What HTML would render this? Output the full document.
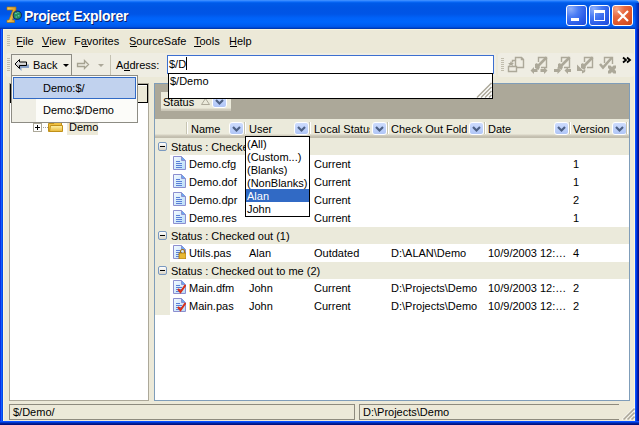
<!DOCTYPE html>
<html><head><meta charset="utf-8">
<style>
*{margin:0;padding:0;box-sizing:border-box}
html{background:#e6dfc2}body{width:639px;height:425px;overflow:hidden;background:transparent}
body{position:relative;font-family:"Liberation Sans",sans-serif;font-size:11px;color:#000}
.a{position:absolute}
.t{position:absolute;white-space:nowrap;line-height:13px}
#title{left:0;top:0;width:639px;height:29px;
background:linear-gradient(to bottom,#4a97ff 0px,#2a80ff 1px,#0a6af8 2px,#005ae8 3px,#0054e3 8px,#0055e6 14px,#0062f8 18px,#0066fc 22px,#005ef2 25px,#0056e8 27px,#0040c0 28px,#0035a8 29px);
border-radius:0 4px 0 0}
#lf{left:0;top:29px;width:3px;height:396px;background:linear-gradient(to right,#0a2ee0 0,#0a2ee0 1px,#1060ff 1px,#1060ff 2px,#0048e8 2px)}
#rf{left:635px;top:29px;width:4px;height:396px;background:linear-gradient(to right,#0a50ff 0,#0a50ff 1px,#0038e0 1px,#0038e0 2px,#0020b0 2px,#0020b0 3px,#001090 3px)}
#bf{left:0;top:421px;width:639px;height:4px;background:linear-gradient(to bottom,#0a50ff 0,#0a50ff 1px,#0038d0 1px,#0038d0 2px,#002098 2px,#002098 3px,#001080 3px)}
.ttl{left:24px;top:7.5px;font-size:14px;letter-spacing:-0.25px;font-weight:bold;color:#fff;text-shadow:1px 1px 0 #0a1e6e;line-height:17px}
.cb{width:21px;height:21px;top:5px;border:1px solid #fff;border-radius:3px}
.grip{width:3px;background:repeating-linear-gradient(to bottom,#c1bdad 0,#c1bdad 1px,transparent 1px,transparent 2px)}
.sep{width:1px;background:#c5c2b2}
.hd{background:linear-gradient(to bottom,#ebeadb 0,#ebeadb 15px,#d6d2c2 16px,#cbc7b8 17px,#c1bdad 18px)}
.dd{width:15px;height:13px;border:1px solid #fff;background:linear-gradient(to bottom,#cddcfd,#b0c6f7);border-radius:3px}
.row{left:170px;width:459px;height:18px;background:#fff}
.grp{left:155px;width:474px;height:17px;background:#ebeadb}
.mbox{width:9px;height:9px;border:1px solid #7a99c0;border-radius:2px;background:linear-gradient(to bottom,#fff,#d8d3c5)}
.mbox::after{content:"";position:absolute;left:1px;top:3px;width:5px;height:1px;background:#000}
</style></head><body>
<div id="title" class="a"></div>
<div class="a" style="left:0;top:29px;width:639px;height:396px;background:#ece9d8"></div>
<div id="lf" class="a"></div>
<div class="a" style="left:635px;top:3px;width:4px;height:26px;background:linear-gradient(to right,#0050e8,#0038c8 50%,#0020a0)"></div>
<div id="rf" class="a"></div>
<div id="bf" class="a"></div>
<div class="a" style="left:3px;top:29px;width:632px;height:1px;background:#fcf6dc"></div>
<div class="a" style="left:3px;top:29px;width:1px;height:392px;background:#fcf6dc"></div>
<div class="a" style="left:634px;top:29px;width:1px;height:392px;background:#fcf6dc"></div>

<!-- title icon -->
<svg class="a" style="left:0;top:0" width="26" height="26" viewBox="0 0 26 26">
<defs><linearGradient id="gold" x1="0" y1="0" x2="1" y2="0"><stop offset="0" stop-color="#f8d060"/><stop offset="1" stop-color="#d89820"/></linearGradient></defs>
<path d="M7 7 H16 V10 L12.5 20 H14.5 V22.5 H7 V20 H9 L12.8 10 H7 Z" fill="url(#gold)" stroke="#a87010" stroke-width="0.7"/>
<circle cx="17.3" cy="15.2" r="4.1" fill="#23905a" stroke="#0e1e6a" stroke-width="1"/>
<path d="M15.3 13.6 h1.4 M17.8 15.8 h1.6 M15.6 17 h1.2 M17.5 12.7 h1" stroke="#8fd0f0" stroke-width="0.9"/>
</svg>
<div class="t ttl">Project Explorer</div>
<div class="a cb" style="left:566px;background:radial-gradient(circle at 20% 15%,#8fb0fb 0,#4a7cf4 35%,#2a5ce8 70%,#1d4ad8 100%)"><div class="a" style="left:4px;top:12px;width:8px;height:3px;background:#fff"></div></div>
<div class="a cb" style="left:589px;background:radial-gradient(circle at 20% 15%,#8fb0fb 0,#4a7cf4 35%,#2a5ce8 70%,#1d4ad8 100%)"><div class="a" style="left:4px;top:4px;width:11px;height:11px;border:1px solid #fff;border-top-width:3px"></div></div>
<div class="a cb" style="left:612px;background:radial-gradient(circle at 20% 15%,#f6a88a 0,#e86a42 35%,#dc5428 70%,#c84418 100%)">
<svg class="a" style="left:4px;top:4px" width="12" height="12"><path d="M1 1 L11 11 M11 1 L1 11" stroke="#fff" stroke-width="2.2"/></svg></div>
<!-- menu bar -->
<div class="a grip" style="left:7px;top:35px;height:11px"></div>
<div class="t" style="left:16px;top:35px">File</div>
<div class="t" style="left:42px;top:35px">View</div>
<div class="t" style="left:74px;top:35px">Favorites</div>
<div class="t" style="left:129px;top:35px">SourceSafe</div>
<div class="t" style="left:194px;top:35px">Tools</div>
<div class="t" style="left:229px;top:35px">Help</div>

<div class="a" style="left:17px;top:46px;width:6px;height:1px;background:#000"></div>
<div class="a" style="left:42px;top:46px;width:7px;height:1px;background:#000"></div>
<div class="a" style="left:82px;top:46px;width:6px;height:1px;background:#000"></div>
<div class="a" style="left:130px;top:46px;width:7px;height:1px;background:#000"></div>
<div class="a" style="left:194px;top:46px;width:7px;height:1px;background:#000"></div>
<div class="a" style="left:230px;top:46px;width:7px;height:1px;background:#000"></div>
<!-- toolbar -->
<div class="a" style="left:6px;top:53px;width:490px;height:24px;background:#efede3;border-radius:3px"></div>
<div class="a" style="left:498px;top:53px;width:136px;height:24px;background:#efede3;border-radius:3px"></div>
<div class="a grip" style="left:7px;top:58px;height:13px"></div>
<div class="a" style="left:11px;top:54px;width:61px;height:22px;border:1px solid #8d8c84;border-bottom:none;background:#f1efe5"></div>
<svg class="a" style="left:12px;top:56px" width="20" height="18" viewBox="12 56 20 18">
<defs><linearGradient id="ag" x1="0" y1="0" x2="0" y2="1"><stop offset="0" stop-color="#ffffff"/><stop offset="1" stop-color="#a8a8a8"/></linearGradient></defs>
<path d="M17 66.5 L21.5 62 L21.5 64.5 L29 64.5 L29 68 L21.5 68 L21.5 71 Z" fill="#8aa2c8"/>
<path d="M15 64 L19.5 59.5 L19.5 62 L26.5 62 L26.5 65.5 L19.5 65.5 L19.5 68.5 Z" fill="url(#ag)" stroke="#000" stroke-width="1" stroke-linejoin="miter"/>
</svg>
<div class="t" style="left:33px;top:59px">Back</div>
<div class="a" style="left:63px;top:64px;width:0;height:0;border-left:3px solid transparent;border-right:3px solid transparent;border-top:3px solid #000"></div>
<svg class="a" style="left:75px;top:58px" width="16" height="14" viewBox="75 58 16 14"><path d="M77.5 63.5 H84.5 V60.5 L88.5 64.5 L84.5 68.5 V66.5 H77.5 Z" fill="none" stroke="#a5a291" stroke-width="1.3"/></svg>
<div class="a" style="left:98px;top:64px;width:0;height:0;border-left:3px solid transparent;border-right:3px solid transparent;border-top:3px solid #aca899"></div>
<div class="a sep" style="left:110px;top:55px;height:20px"></div>
<div class="t" style="left:116px;top:59px">Address:</div><div class="a" style="left:124px;top:70px;width:6px;height:1px;background:#000"></div>
<div class="a" style="left:167px;top:55px;width:327px;height:19px;border:1px solid #3c6fd0;background:#fff"></div>
<div class="t" style="left:169px;top:58px">$/D</div>
<div class="a" style="left:186px;top:57px;width:1px;height:13px;background:#000"></div>

<!-- right toolbar -->
<div class="a grip" style="left:501px;top:58px;height:13px"></div>
<svg class="a" style="left:500px;top:52px" width="135" height="25" viewBox="500 52 135 25">
<g fill="none" stroke="#aca899" stroke-width="1.4">
<path d="M515.5 60.5 V57.5 H521.5 L523.5 59.5 V67.5 H516.5"/>
<path d="M521.5 57.5 V59.5 H523.5"/>
<path d="M512.5 62.5 V60.5 H515.5 V66.5"/>
<path d="M508.5 66.5 H516.5 V71.5 H508.5 Z"/>
<path d="M538.5 62 V57.5 H546.5 V67.5 H541"/>
<path d="M561.5 62 V57.5 H569.5 V67.5 H564"/>
<path d="M584.5 62 V57.5 H592.5 V67.5 H587"/>
<path d="M604.5 63 V57.5 H612.5 V64"/>
</g>
<g stroke="#aca899" stroke-width="2.6" fill="none">
<path d="M546.5 57.5 L537 67"/>
<path d="M569.5 57.5 L560 67"/>
<path d="M592.5 57.5 L583 67"/>
<path d="M612 57.5 L603 67.5 L600 64"/>
</g>
<g fill="#aca899">
<path d="M511 61 L512 63 L514 63 L512.5 64.3 L513.2 66 L511 65 L508.8 66 L509.5 64.3 L508 63 L510 63 Z"/>
<path d="M535 64 L537 63 L540 67 L538.5 70 L535 68 Z"/>
<path d="M530.5 70.5 L534 67 V69 H537.5 V72 H534 V74 Z"/>
<path d="M547.5 70.5 L544 67 V69 H540.5 V72 H544 V74 Z"/>
<path d="M558 64 L560 63 L563 67 L561.5 70 L558 68 Z"/>
<path d="M561 70.5 L557.5 67 V69 H554 V72 H557.5 V74 Z"/>
<path d="M564.5 70.5 L568 67 V69 H571 V72 H568 V74 Z"/>
<path d="M581 64 L583 63 L586 67 L584.5 70 L581 68 Z"/>
<path d="M577 64.5 V71 H583.5 Z"/>
<path d="M582 71 L585.5 69.5 L585 72 L582 73.5 Z"/>
<path d="M608 65.5 h2.5 l1.5 1.5 l1.5 -1.5 h2.5 v2.5 l-1.5 1.5 l1.5 1.5 v2.5 h-2.5 l-1.5 -1.5 l-1.5 1.5 h-2.5 v-2.5 l1.5 -1.5 l-1.5 -1.5 Z"/>
</g>
<path d="M623 57.5 L626 60 L623 62.5 M627 57.5 L630 60 L627 62.5" fill="none" stroke="#000" stroke-width="1.8"/>
</svg>


<!-- tree pane -->
<div class="a" style="left:9px;top:83px;width:140px;height:318px;border:1px solid #aca899;background:#fff"></div>
<div class="a" style="left:10px;top:84px;width:138px;height:19px;border:1px solid #000;background:#ece9d8;box-shadow:inset 1px 1px 0 #fff"></div>
<div class="a" style="left:33px;top:123px;width:9px;height:9px;border:1px solid #aca899;background:#fff"><div class="a" style="left:1px;top:3px;width:5px;height:1px;background:#000"></div><div class="a" style="left:3px;top:1px;width:1px;height:5px;background:#000"></div></div>
<div class="a" style="left:43px;top:127px;width:5px;height:1px;background:repeating-linear-gradient(to right,#a0a0a0 0,#a0a0a0 1px,transparent 1px,transparent 2px)"></div>
<svg class="a" style="left:48px;top:122px" width="16" height="11" viewBox="0 0 16 11">
<defs><linearGradient id="fg" x1="0" y1="0" x2="0" y2="1"><stop offset="0" stop-color="#fff2a8"/><stop offset="1" stop-color="#e8b838"/></linearGradient></defs>
<path d="M0.5 1.5 H6 L7 0.5 H13.5 V9.5 H0.5 Z" fill="#f0c040" stroke="#c09018"/>
<path d="M2.5 3.5 H14.5 V9.5 H1.5 Z" fill="url(#fg)" stroke="#c09018"/>
</svg>
<div class="a" style="left:67px;top:119px;width:31px;height:16px;background:#ece9d8"></div><div class="t" style="left:69px;top:121px">Demo</div>

<!-- right pane -->
<div class="a" style="left:154px;top:83px;width:476px;height:318px;border:1px solid #7f9db9;background:#fff"></div>
<div class="a" style="left:155px;top:84px;width:474px;height:35px;background:#aca899"></div>
<div class="a hd" style="left:155px;top:119px;width:474px;height:19px"></div>

<!-- header -->
<div class="a" style="left:186px;top:122px;width:1px;height:12px;background:#c7c5b2"></div><div class="a" style="left:187px;top:122px;width:1px;height:12px;background:#fff"></div><div class="a" style="left:191px;top:119px;width:36px;height:17px;overflow:hidden"><div class="t" style="left:0;top:4px">Name</div></div><div class="a dd" style="left:229px;top:122px"><svg class="a" style="left:2px;top:3px" width="9" height="7"><path d="M1 1 L4.5 4.5 L8 1" fill="none" stroke="#4d6185" stroke-width="2.2"/></svg></div>
<div class="a" style="left:244px;top:122px;width:1px;height:12px;background:#c7c5b2"></div><div class="a" style="left:245px;top:122px;width:1px;height:12px;background:#fff"></div><div class="a" style="left:249px;top:119px;width:43px;height:17px;overflow:hidden"><div class="t" style="left:0;top:4px">User</div></div><div class="a dd" style="left:294px;top:122px"><svg class="a" style="left:2px;top:3px" width="9" height="7"><path d="M1 1 L4.5 4.5 L8 1" fill="none" stroke="#4d6185" stroke-width="2.2"/></svg></div>
<div class="a" style="left:309px;top:122px;width:1px;height:12px;background:#c7c5b2"></div><div class="a" style="left:310px;top:122px;width:1px;height:12px;background:#fff"></div><div class="a" style="left:314px;top:119px;width:56px;height:17px;overflow:hidden"><div class="t" style="left:0;top:4px">Local Status</div></div><div class="a dd" style="left:372px;top:122px"><svg class="a" style="left:2px;top:3px" width="9" height="7"><path d="M1 1 L4.5 4.5 L8 1" fill="none" stroke="#4d6185" stroke-width="2.2"/></svg></div>
<div class="a" style="left:387px;top:122px;width:1px;height:12px;background:#c7c5b2"></div><div class="a" style="left:388px;top:122px;width:1px;height:12px;background:#fff"></div><div class="a" style="left:391px;top:119px;width:76px;height:17px;overflow:hidden"><div class="t" style="left:0;top:4px">Check Out Folder</div></div><div class="a dd" style="left:469px;top:122px"><svg class="a" style="left:2px;top:3px" width="9" height="7"><path d="M1 1 L4.5 4.5 L8 1" fill="none" stroke="#4d6185" stroke-width="2.2"/></svg></div>
<div class="a" style="left:484px;top:122px;width:1px;height:12px;background:#c7c5b2"></div><div class="a" style="left:485px;top:122px;width:1px;height:12px;background:#fff"></div><div class="a" style="left:488px;top:119px;width:64px;height:17px;overflow:hidden"><div class="t" style="left:0;top:4px">Date</div></div><div class="a dd" style="left:554px;top:122px"><svg class="a" style="left:2px;top:3px" width="9" height="7"><path d="M1 1 L4.5 4.5 L8 1" fill="none" stroke="#4d6185" stroke-width="2.2"/></svg></div>
<div class="a" style="left:569px;top:122px;width:1px;height:12px;background:#c7c5b2"></div><div class="a" style="left:570px;top:122px;width:1px;height:12px;background:#fff"></div><div class="a" style="left:573px;top:119px;width:37px;height:17px;overflow:hidden"><div class="t" style="left:0;top:4px">Version</div></div><div class="a dd" style="left:612px;top:122px"><svg class="a" style="left:2px;top:3px" width="9" height="7"><path d="M1 1 L4.5 4.5 L8 1" fill="none" stroke="#4d6185" stroke-width="2.2"/></svg></div>
<div class="a" style="left:626px;top:122px;width:1px;height:12px;background:#c7c5b2"></div><div class="a" style="left:627px;top:122px;width:1px;height:12px;background:#fff"></div>
<!-- grid -->
<div class="a" style="left:155px;top:138px;width:15px;height:177px;background:#ebeadb"></div>
<div class="a grp" style="top:138px"></div><div class="a mbox" style="left:158px;top:142px"></div><div class="t" style="left:171px;top:141px">Status : Checked out (0)</div>
<div class="a row" style="top:155px"></div><svg class="a" style="left:173px;top:156px" width="13" height="14" viewBox="0 0 13 14"><defs><linearGradient id="dg1" x1="0" y1="0" x2="1" y2="1"><stop offset="0" stop-color="#f4faff"/><stop offset="1" stop-color="#b8dcf8"/></linearGradient></defs><path d="M0.5 0.5 H8.5 L12.5 4.5 V13.5 H0.5 Z" fill="url(#dg1)" stroke="#8c8fd0"/><path d="M8.5 0.5 V4.5 H12.5" fill="#6aa8f0" stroke="#8c8fd0"/><path d="M3 5.5 H7 M3 7.5 H9 M3 9.5 H9 M3 11.5 H9" stroke="#5a7fd8" stroke-width="1"/></svg><div class="t" style="left:189px;top:158px">Demo.cfg</div><div class="t" style="left:314px;top:158px">Current</div><div class="t" style="left:573px;top:158px">1</div>
<div class="a row" style="top:173px"></div><svg class="a" style="left:173px;top:174px" width="13" height="14" viewBox="0 0 13 14"><defs><linearGradient id="dg2" x1="0" y1="0" x2="1" y2="1"><stop offset="0" stop-color="#f4faff"/><stop offset="1" stop-color="#b8dcf8"/></linearGradient></defs><path d="M0.5 0.5 H8.5 L12.5 4.5 V13.5 H0.5 Z" fill="url(#dg2)" stroke="#8c8fd0"/><path d="M8.5 0.5 V4.5 H12.5" fill="#6aa8f0" stroke="#8c8fd0"/><path d="M3 5.5 H7 M3 7.5 H9 M3 9.5 H9 M3 11.5 H9" stroke="#5a7fd8" stroke-width="1"/></svg><div class="t" style="left:189px;top:176px">Demo.dof</div><div class="t" style="left:314px;top:176px">Current</div><div class="t" style="left:573px;top:176px">1</div>
<div class="a row" style="top:191px"></div><svg class="a" style="left:173px;top:192px" width="13" height="14" viewBox="0 0 13 14"><defs><linearGradient id="dg3" x1="0" y1="0" x2="1" y2="1"><stop offset="0" stop-color="#f4faff"/><stop offset="1" stop-color="#b8dcf8"/></linearGradient></defs><path d="M0.5 0.5 H8.5 L12.5 4.5 V13.5 H0.5 Z" fill="url(#dg3)" stroke="#8c8fd0"/><path d="M8.5 0.5 V4.5 H12.5" fill="#6aa8f0" stroke="#8c8fd0"/><path d="M3 5.5 H7 M3 7.5 H9 M3 9.5 H9 M3 11.5 H9" stroke="#5a7fd8" stroke-width="1"/></svg><div class="t" style="left:189px;top:194px">Demo.dpr</div><div class="t" style="left:314px;top:194px">Current</div><div class="t" style="left:573px;top:194px">2</div>
<div class="a row" style="top:209px"></div><svg class="a" style="left:173px;top:210px" width="13" height="14" viewBox="0 0 13 14"><defs><linearGradient id="dg4" x1="0" y1="0" x2="1" y2="1"><stop offset="0" stop-color="#f4faff"/><stop offset="1" stop-color="#b8dcf8"/></linearGradient></defs><path d="M0.5 0.5 H8.5 L12.5 4.5 V13.5 H0.5 Z" fill="url(#dg4)" stroke="#8c8fd0"/><path d="M8.5 0.5 V4.5 H12.5" fill="#6aa8f0" stroke="#8c8fd0"/><path d="M3 5.5 H7 M3 7.5 H9 M3 9.5 H9 M3 11.5 H9" stroke="#5a7fd8" stroke-width="1"/></svg><div class="t" style="left:189px;top:212px">Demo.res</div><div class="t" style="left:314px;top:212px">Current</div><div class="t" style="left:573px;top:212px">1</div>
<div class="a grp" style="top:227px"></div><div class="a mbox" style="left:158px;top:231px"></div><div class="t" style="left:171px;top:230px">Status : Checked out (1)</div>
<div class="a row" style="top:244px"></div><svg class="a" style="left:173px;top:245px" width="13" height="14" viewBox="0 0 13 14"><defs><linearGradient id="dg5" x1="0" y1="0" x2="1" y2="1"><stop offset="0" stop-color="#f4faff"/><stop offset="1" stop-color="#b8dcf8"/></linearGradient></defs><path d="M0.5 0.5 H8.5 L12.5 4.5 V13.5 H0.5 Z" fill="url(#dg5)" stroke="#8c8fd0"/><path d="M8.5 0.5 V4.5 H12.5" fill="#6aa8f0" stroke="#8c8fd0"/><path d="M3 5.5 H7 M3 7.5 H9 M3 9.5 H9 M3 11.5 H9" stroke="#5a7fd8" stroke-width="1"/><rect x="6" y="8" width="7" height="6" fill="#e8b830" stroke="#a07010" stroke-width="0.8"/><path d="M7.5 8 V6.5 A2 2 0 0 1 11.5 6.5 V8" fill="none" stroke="#a07010" stroke-width="1.2"/></svg><div class="t" style="left:189px;top:247px">Utils.pas</div><div class="t" style="left:249px;top:247px">Alan</div><div class="t" style="left:314px;top:247px">Outdated</div><div class="t" style="left:391px;top:247px">D:\ALAN\Demo</div><div class="t" style="left:488px;top:247px">10/9/2003 12:&hellip;</div><div class="t" style="left:573px;top:247px">4</div>
<div class="a grp" style="top:262px"></div><div class="a mbox" style="left:158px;top:266px"></div><div class="t" style="left:171px;top:265px">Status : Checked out to me (2)</div>
<div class="a row" style="top:279px"></div><svg class="a" style="left:173px;top:280px" width="13" height="14" viewBox="0 0 13 14"><defs><linearGradient id="dg6" x1="0" y1="0" x2="1" y2="1"><stop offset="0" stop-color="#f4faff"/><stop offset="1" stop-color="#b8dcf8"/></linearGradient></defs><path d="M0.5 0.5 H8.5 L12.5 4.5 V13.5 H0.5 Z" fill="url(#dg6)" stroke="#8c8fd0"/><path d="M8.5 0.5 V4.5 H12.5" fill="#6aa8f0" stroke="#8c8fd0"/><path d="M3 5.5 H7 M3 7.5 H9 M3 9.5 H9 M3 11.5 H9" stroke="#5a7fd8" stroke-width="1"/><path d="M5 9 L7.5 12 L12.5 5" fill="none" stroke="#d83018" stroke-width="2"/></svg><div class="t" style="left:189px;top:282px">Main.dfm</div><div class="t" style="left:249px;top:282px">John</div><div class="t" style="left:314px;top:282px">Current</div><div class="t" style="left:391px;top:282px">D:\Projects\Demo</div><div class="t" style="left:488px;top:282px">10/9/2003 12:&hellip;</div><div class="t" style="left:573px;top:282px">2</div>
<div class="a row" style="top:297px"></div><svg class="a" style="left:173px;top:298px" width="13" height="14" viewBox="0 0 13 14"><defs><linearGradient id="dg7" x1="0" y1="0" x2="1" y2="1"><stop offset="0" stop-color="#f4faff"/><stop offset="1" stop-color="#b8dcf8"/></linearGradient></defs><path d="M0.5 0.5 H8.5 L12.5 4.5 V13.5 H0.5 Z" fill="url(#dg7)" stroke="#8c8fd0"/><path d="M8.5 0.5 V4.5 H12.5" fill="#6aa8f0" stroke="#8c8fd0"/><path d="M3 5.5 H7 M3 7.5 H9 M3 9.5 H9 M3 11.5 H9" stroke="#5a7fd8" stroke-width="1"/><path d="M5 9 L7.5 12 L12.5 5" fill="none" stroke="#d83018" stroke-width="2"/></svg><div class="t" style="left:189px;top:300px">Main.pas</div><div class="t" style="left:249px;top:300px">John</div><div class="t" style="left:314px;top:300px">Current</div><div class="t" style="left:391px;top:300px">D:\Projects\Demo</div><div class="t" style="left:488px;top:300px">10/9/2003 12:&hellip;</div><div class="t" style="left:573px;top:300px">2</div>

<!-- group-by status button -->
<div class="a" style="left:161px;top:92px;width:70px;height:19px;background:linear-gradient(to bottom,#ebeadb 0,#ebeadb 16px,#d6d2c2 17px,#cbc7b8 18px)"></div>
<div class="t" style="left:163px;top:96px">Status</div>
<svg class="a" style="left:201px;top:98px" width="9" height="7"><path d="M0.5 6.5 L4.5 0.5 L8.5 6.5 Z" fill="none" stroke="#aca899"/></svg>
<div class="a dd" style="left:212px;top:95px"><svg class="a" style="left:2px;top:3px" width="9" height="7"><path d="M1 1 L4.5 4.5 L8 1" fill="none" stroke="#4d6185" stroke-width="2.2"/></svg></div>

<!-- autocomplete -->
<div class="a" style="left:168px;top:73px;width:325px;height:26px;border:1px solid #000;background:#fff"></div>
<div class="t" style="left:170px;top:75px">$/Demo</div>
<svg class="a" style="left:474px;top:80px" width="18" height="18" viewBox="474 80 18 18">
<path d="M477 97.5 L491.5 83 M481 97.5 L491.5 87 M485 97.5 L491.5 91 M489 97.5 L491.5 95" stroke="#aca899" stroke-width="1.5"/>
</svg>

<!-- user filter dropdown -->
<div class="a" style="left:245px;top:136px;width:65px;height:81px;border:1px solid #000;background:#fff"></div>
<div class="t" style="left:247px;top:138px">(All)</div>
<div class="t" style="left:247px;top:151px">(Custom...)</div>
<div class="t" style="left:247px;top:164px">(Blanks)</div>
<div class="t" style="left:247px;top:177px">(NonBlanks)</div>
<div class="a" style="left:246px;top:189px;width:63px;height:13px;background:#316ac5"></div>
<div class="t" style="left:247px;top:190px;color:#fff">Alan</div>
<div class="t" style="left:247px;top:203px">John</div>

<!-- back menu -->
<div class="a" style="left:11px;top:75px;width:127px;height:48px;border:1px solid #8d8c84;background:#fcfcf9"></div>
<div class="a" style="left:72px;top:75px;width:65px;height:1px;background:#8d8c84"></div>
<div class="a" style="left:12px;top:76px;width:1px;height:1px;background:#f1efe3"></div>
<div class="a" style="left:12px;top:98px;width:24px;height:24px;background:#efeee5"></div>
<div class="a" style="left:13px;top:77px;width:123px;height:22px;border:1px solid #316ac5;background:#c1d2ee"></div>
<div class="t" style="left:43px;top:82px">Demo:$/</div>
<div class="t" style="left:43px;top:104px">Demo:$/Demo</div>

<!-- status bar -->
<div class="a" style="left:9px;top:404px;width:346px;height:16px;border:1px solid #8e8b7e"></div>
<div class="t" style="left:13px;top:406px">$/Demo/</div>
<div class="a" style="left:359px;top:404px;width:260px;height:16px;border:1px solid #8e8b7e;border-right:none"></div>
<div class="t" style="left:363px;top:406px">D:\Projects\Demo</div>

<svg class="a" style="left:619px;top:404px" width="16" height="17" viewBox="619 404 16 17">
<path d="M622.5 419.5 L634.5 407.5 M626.5 419.5 L634.5 411.5 M630.5 419.5 L634.5 415.5" stroke="#fff" stroke-width="1.2"/>
<path d="M623.5 419.5 L634.5 408.5 M627.5 419.5 L634.5 412.5 M631.5 419.5 L634.5 416.5" stroke="#aca899" stroke-width="1.6"/>
</svg>
</body></html>
